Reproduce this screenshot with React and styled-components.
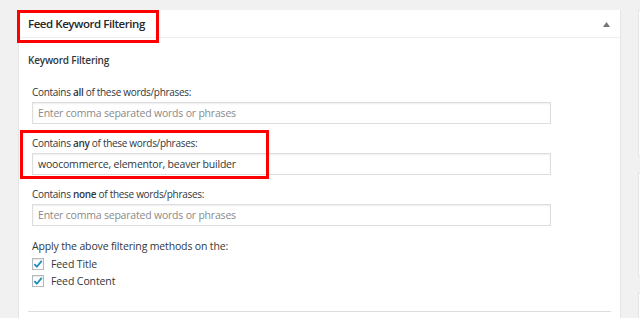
import React from "react";
import styled, { createGlobalStyle, css } from "styled-components";

const Global = createGlobalStyle`
  html, body { margin: 0; padding: 0; background: #f1f1f1; }
  body { font-family: "Open Sans", "Noto Sans", Arial, sans-serif; color: #32373c; }
  * { box-sizing: border-box; }
`;

const Page = styled.div`
  display: flex;
  align-items: flex-start;
  gap: 17px;
  padding: 10px 0 0 18px;
  height: 318px;
  overflow: hidden;
`;

const highlight = css`
  position: relative;
  &::after {
    content: "";
    position: absolute;
    border: 3px solid #f00;
    pointer-events: none;
  }
`;

const Panel = styled.section`
  width: 603px;
  flex: none;
  background: #fff;
  border: 1px solid #e5e5e5;
  border-top: none;
  min-height: 330px;
`;

const Header = styled.div`
  height: 28px;
  display: flex;
  align-items: center;
  justify-content: space-between;
  border-bottom: 1px solid #eee;
  padding: 0 10px 0 9px;
`;

const Title = styled.h2`
  ${highlight}
  margin: 0;
  font-size: 11.5px;
  line-height: 15px;
  font-weight: 600;
  color: #23282d;
  letter-spacing: -0.45px;
  &::after {
    left: -11px;
    top: -6px;
    width: 136px;
    height: 27px;
  }
`;

const Toggle = styled.svg`
  width: 7px;
  height: 5px;
  display: block;
  margin-top: 2px;
`;

const Body = styled.div`
  padding: 15px 9px 0 9px;
`;

const SectionTitle = styled.h3`
  margin: 0 0 17px 0;
  font-size: 10px;
  font-weight: 600;
  line-height: 15px;
  color: #32373c;
  letter-spacing: -0.2px;
`;

const Fields = styled.div`
  display: flex;
  flex-direction: column;
  gap: 12px;
  padding-left: 4px;
`;

const Field = styled.div`
  display: flex;
  flex-direction: column;
  gap: 2px;
  ${(p) =>
    p.$highlight &&
    css`
      ${highlight}
      &::after {
        left: -12px;
        top: -6px;
        width: 243px;
        bottom: -4px;
      }
    `}
`;

const Label = styled.label`
  font-size: 10px;
  line-height: 15px;
  color: #32373c;
  letter-spacing: -0.3px;
  b { font-weight: 600; }
`;

const Input = styled.input`
  width: 519px;
  height: 22px;
  border: 1px solid #ddd;
  box-shadow: inset 0 1px 2px rgba(0, 0, 0, 0.07);
  padding: 0 5px;
  font-family: inherit;
  font-size: 10.5px;
  color: #32373c;
  letter-spacing: -0.2px;
  outline: none;
  background: #fff;
  &::placeholder { color: #8a8a8a; opacity: 1; }
`;

const Apply = styled.div`
  margin-top: 13px;
  padding-left: 4px;
  display: flex;
  flex-direction: column;
`;

const ApplyLabel = styled(Label)`
  font-size: 10.5px;
  letter-spacing: -0.15px;
`;

const Options = styled.div`
  display: flex;
  flex-direction: column;
  gap: 5px;
  margin-top: 4px;
`;

const Option = styled.label`
  display: flex;
  align-items: center;
  gap: 7px;
  font-size: 10.5px;
  line-height: 12px;
  color: #32373c;
  letter-spacing: -0.1px;
`;

const Box = styled.span`
  width: 12px;
  height: 12px;
  border: 1px solid #b4b9be;
  background: #fff;
  box-shadow: inset 0 1px 2px rgba(0, 0, 0, 0.1);
  display: flex;
  align-items: center;
  justify-content: center;
  flex: none;
`;

const Divider = styled.hr`
  margin: 24px 0 0 0;
  border: none;
  border-top: 1px solid #ddd;
`;

const Sidebar = styled.aside`
  display: flex;
  flex-direction: column;
  gap: 17px;
  width: 120px;
  flex: none;
`;

const SideBox = styled.div`
  height: ${(p) => p.$h}px;
  background: #fff;
  border: 1px solid #e5e5e5;
`;

const Check = () => (
  <svg width="11" height="10" viewBox="0 0 11 10">
    <path d="M1.5 5.2 L4.2 8 L9.6 1.6" fill="none" stroke="#1e8cbe" strokeWidth="2" />
  </svg>
);

export default function App() {
  return (
    <>
      <Global />
      <Page>
        <Panel>
          <Header>
            <Title>Feed Keyword Filtering</Title>
            <Toggle viewBox="0 0 7 5">
              <polygon points="3.5,0 7,5 0,5" fill="#72777c" />
            </Toggle>
          </Header>
          <Body>
            <SectionTitle>Keyword Filtering</SectionTitle>
            <Fields>
              <Field>
                <Label>Contains <b>all</b> of these words/phrases:</Label>
                <Input placeholder="Enter comma separated words or phrases" />
              </Field>
              <Field $highlight>
                <Label>Contains <b>any</b> of these words/phrases:</Label>
                <Input defaultValue="woocommerce, elementor, beaver builder" />
              </Field>
              <Field>
                <Label>Contains <b>none</b> of these words/phrases:</Label>
                <Input placeholder="Enter comma separated words or phrases" />
              </Field>
            </Fields>
            <Apply>
              <ApplyLabel>Apply the above filtering methods on the:</ApplyLabel>
              <Options>
                <Option><Box><Check /></Box>Feed Title</Option>
                <Option><Box><Check /></Box>Feed Content</Option>
              </Options>
            </Apply>
            <Divider />
          </Body>
        </Panel>
        <Sidebar>
          <SideBox $h={146} />
          <SideBox $h={103} />
          <SideBox $h={60} />
        </Sidebar>
      </Page>
    </>
  );
}
